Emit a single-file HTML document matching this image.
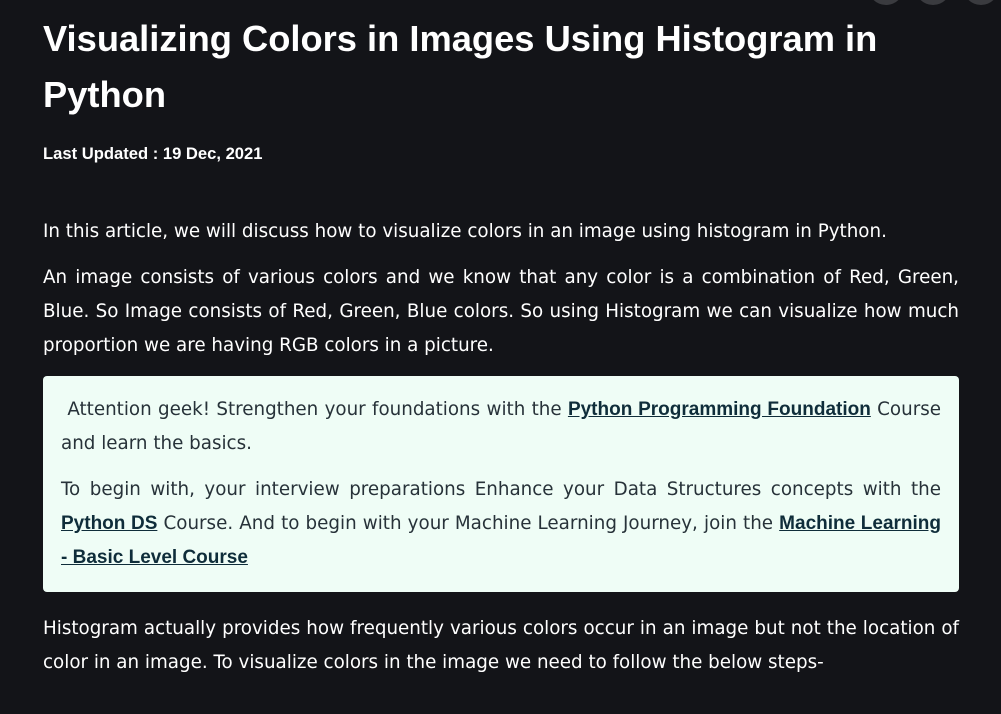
<!DOCTYPE html><html><head><style>
body{margin:0;background:#131418;width:1001px;height:714px;overflow:hidden;font-family:"DejaVu Sans",sans-serif;color:#fff;position:relative}
.c{position:absolute;top:-31px;width:36px;height:36px;border-radius:50%;background:#3a3b3f}
.w{position:absolute;left:43px;width:916px}
h1{margin:0;font-family:"Liberation Sans",sans-serif;font-size:36.3px;line-height:56px;font-weight:bold;position:absolute;left:43px;top:11px;width:920px}
.d{position:absolute;left:43px;top:144px;font-size:16.6px;font-weight:bold;font-family:"Liberation Sans",sans-serif}
p{margin:0;font-size:18.3px;line-height:34px;text-align:justify}
.box{position:absolute;left:43px;top:376px;width:880px;height:182px;padding:17px 18px;background:#effdf6;border-radius:4px;color:#273239}
.box a{color:#0f2d3a;font-weight:bold;text-decoration:underline;font-family:"Liberation Sans",sans-serif;font-size:19px}
</style></head><body>
<div class="c" style="left:868px"></div><div class="c" style="left:915px"></div><div class="c" style="left:963px"></div>
<h1>Visualizing Colors in Images Using Histogram in Python</h1>
<div class="d">Last Updated : 19 Dec, 2021</div>
<div class="w" style="top:215px"><p>In this article, we will discuss how to visualize colors in an image using histogram in Python.</p></div>
<div class="w" style="top:261px"><p>An image consists of various colors and we know that any color is a combination of Red, Green, Blue. So Image consists of Red, Green, Blue colors. So using Histogram we can visualize how much proportion we are having RGB colors in a picture.</p></div>
<div class="box"><p>&nbsp;Attention geek! Strengthen your foundations with the <a>Python Programming Foundation</a> Course and learn the basics.</p>
<p style="margin-top:12px">To begin with, your interview preparations Enhance your Data Structures concepts with the <a>Python DS</a> Course. And to begin with your Machine Learning Journey, join the <a>Machine Learning -&nbsp;Basic Level Course</a></p></div>
<div class="w" style="top:612px"><p>Histogram actually provides how frequently various colors occur in an image but not the location of color in an image. To visualize colors in the image we need to follow the below steps-</p></div>
</body></html>
